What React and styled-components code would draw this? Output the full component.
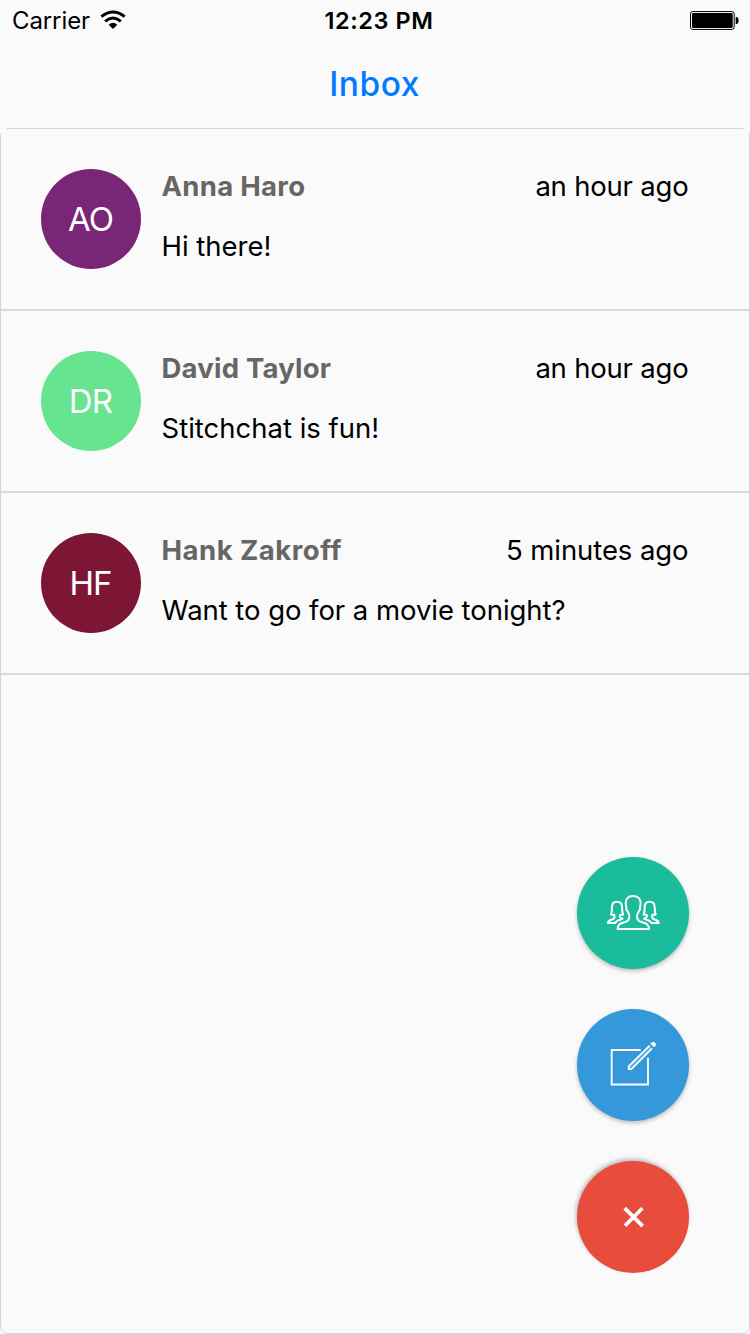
import React from 'react';
import styled, { createGlobalStyle } from 'styled-components';

const GlobalStyle = createGlobalStyle`
  * { box-sizing: border-box; }
  html, body { margin: 0; padding: 0; background: #fafafa; }
  body {
    font-family: Inter, "Liberation Sans", sans-serif;
    color: #000;
    overflow: hidden;
  }
`;

const Screen = styled.div`
  position: relative;
  display: flex;
  flex-direction: column;
  width: 750px;
  height: 1334px;
  background: #fafafa;
`;

const StatusBar = styled.div`
  display: grid;
  grid-template-columns: 1fr auto 1fr;
  align-items: center;
  height: 41px;
  padding: 0 11px 0 12px;
  font-size: 24px;
  line-height: 42px;
`;

const Carrier = styled.div`
  display: flex;
  align-items: center;
  gap: 10px;
  letter-spacing: -0.1px;

  svg {
    margin-bottom: 2px;
  }
`;

const Clock = styled.div`
  font-weight: 600;
  font-size: 23.5px;
  letter-spacing: 0.6px;
  padding-left: 7px;
`;

const Battery = styled.svg`
  justify-self: end;
  width: 49px;
  height: 19px;
  margin-bottom: 2px;
`;

const NavBar = styled.header`
  display: flex;
  justify-content: center;
  height: 87px;
  padding-right: 1px;
  line-height: 87px;
  font-size: 33.5px;
  font-weight: 450;
  letter-spacing: 0.5px;
  color: #007aff;
`;

const List = styled.main`
  position: relative;
  flex: 1;
  border: 1px solid #d5d5da;
  border-radius: 8px;

  &::before,
  &::after {
    content: '';
    position: absolute;
    top: -1px;
    width: 6px;
    height: 5px;
    background: #fafafa;
  }
  &::before { left: -1px; }
  &::after { right: -1px; }
`;

const Row = styled.article`
  display: flex;
  gap: 20.5px;
  height: 182px;
  padding: 40px 60.5px 0 40px;
  border-bottom: 2px solid #dbdbdb;
`;

const Avatar = styled.div`
  flex: none;
  width: 100px;
  height: 100px;
  padding-right: 1px;
  border-radius: 50%;
  background: ${(p) => p.$color};
  color: #fff;
  font-size: 33px;
  font-weight: 370;
  line-height: 101px;
  text-align: center;
  letter-spacing: -0.9px;
`;

const Content = styled.div`
  flex: 1;
  font-size: 27.5px;
  line-height: 34px;
`;

const Heading = styled.div`
  display: flex;
  justify-content: space-between;
`;

const Name = styled.span`
  font-weight: 700;
  color: #666;
  letter-spacing: ${(p) => p.$spacing}px;
`;

const Time = styled.time`
  letter-spacing: ${(p) => p.$spacing}px;
`;

const Message = styled.p`
  margin: 26px 0 0;
  letter-spacing: ${(p) => p.$spacing}px;
`;

const Actions = styled.div`
  position: absolute;
  right: 61px;
  bottom: 61px;
  display: flex;
  flex-direction: column;
  gap: 40px;
`;

const Fab = styled.button`
  width: 112px;
  height: 112px;
  padding: 0;
  border: 0;
  border-radius: 50%;
  background: ${(p) => p.$color};
  box-shadow: ${(p) => p.$shadow || '0 2px 4px rgba(0, 0, 0, 0.25)'};

  svg {
    display: block;
    width: 112px;
    height: 112px;
    fill: none;
    stroke: #fff;
  }
`;

const threads = [
  { initials: 'AO', color: '#792676', name: 'Anna Haro', time: 'an hour ago', text: 'Hi there!', ns: 0.3, ts: -0.2, ms: 0 },
  { initials: 'DR', color: '#67e48f', name: 'David Taylor', time: 'an hour ago', text: 'Stitchchat is fun!', ns: 0.22, ts: -0.2, ms: 0 },
  { initials: 'HF', color: '#7d1635', name: 'Hank Zakroff', time: '5 minutes ago', text: 'Want to go for a movie tonight?', ns: 0.5, ts: -0.08, ms: -0.05 },
];

const WifiIcon = () => (
  <svg width="26" height="20" viewBox="299 30 78 60" fill="none" stroke="#000">
    <path d="M303 50 Q338 22 373 50" strokeWidth="8.500" />
    <path d="M314.500 64 Q338 44 361.500 64" strokeWidth="8.500" />
    <path d="M325 74 Q338 63 351 74 L338 87Z" fill="#000" stroke="none" />
  </svg>
);

const PeopleIcon = () => (
  <svg viewBox="51 51 336 336" strokeWidth="6" strokeLinejoin="round">
    <path d="M219 168C205 168 197 177 197 190C197 195 199 198 199 202C198 205 200 211 203 214C205 220 208 223 208 229C208 238 206 243 196 246C182 250 174 251 173 267H267C266 251 258 250 244 246C234 243 231 238 231 229C231 223 234 220 236 214C239 211 241 205 240 202C240 198 242 195 242 190C242 177 233 168 219 168Z" />
    <path d="M171 185C160 185 156 191 156 201C156 211 156 216 153 224H163C165 231 164 235 158 238C149 241 144 242 144 249H166C167 243 174 241 181 239L188 236C180 234 178 231 180 224H189C186 216 186 211 186 201C186 191 181 185 171 185Z" />
    <path d="M269 185C280 185 284 191 284 201C284 211 284 216 287 224H277C275 231 276 235 282 238C291 241 296 242 296 249H274C273 243 266 241 259 239L252 236C260 234 262 231 260 224H251C254 216 254 211 254 201C254 191 259 185 269 185Z" />
  </svg>
);

const ComposeIcon = () => (
  <svg viewBox="51 57 336 336" strokeWidth="5.500">
    <path d="M242 180H155V283.500H264V203" />
    <path d="M269 167L206 229V237.500H214L276 175" strokeWidth="5.500" />
    <path d="M272 171L211 232" strokeWidth="2.500" strokeOpacity="0.5" />
    <path d="M204 228L216 240H204Z" fill="#fff" stroke="none" />
    <path d="M271 161L276 156.500Q281 154 285 158Q290 162 287 167L282 172Z" fill="#fff" stroke="none" />
  </svg>
);

const CloseIcon = () => (
  <svg viewBox="51 63 336 336" strokeWidth="11">
    <path d="M194 204.500L248 258.500M247 204.500L195 257.500" />
  </svg>
);

export default function App() {
  return (
    <Screen>
      <GlobalStyle />
      <StatusBar>
        <Carrier>
          <span>Carrier</span>
          <WifiIcon />
        </Carrier>
        <Clock>12:23 PM</Clock>
        <Battery viewBox="120 33 148 57">
          <rect x="121.500" y="34.500" width="132" height="54" rx="7" fill="none" stroke="#000" strokeWidth="3" />
          <rect x="126" y="39" width="123" height="45" rx="4" />
          <path d="M258 51h4q5 2 5 10.500t-5 10.500h-4z" />
        </Battery>
      </StatusBar>
      <NavBar>Inbox</NavBar>
      <List>
        {threads.map((t) => (
          <Row key={t.name}>
            <Avatar $color={t.color}>{t.initials}</Avatar>
            <Content>
              <Heading>
                <Name $spacing={t.ns}>{t.name}</Name>
                <Time $spacing={t.ts}>{t.time}</Time>
              </Heading>
              <Message $spacing={t.ms}>{t.text}</Message>
            </Content>
          </Row>
        ))}
      </List>
      <Actions>
        <Fab $color="#1abc9c" aria-label="New group"><PeopleIcon /></Fab>
        <Fab $color="#3498db" aria-label="Compose"><ComposeIcon /></Fab>
        <Fab $color="#e74c3c" $shadow="-1px -2px 4px rgba(0, 0, 0, 0.28)" aria-label="Close"><CloseIcon /></Fab>
      </Actions>
    </Screen>
  );
}
